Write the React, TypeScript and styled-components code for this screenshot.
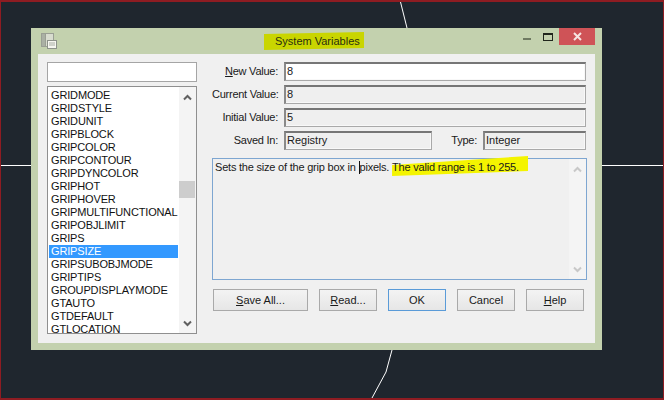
import styled, { createGlobalStyle } from "styled-components";

const items = [
  "GRIDMODE", "GRIDSTYLE", "GRIDUNIT", "GRIPBLOCK", "GRIPCOLOR", "GRIPCONTOUR", "GRIPDYNCOLOR", "GRIPHOT",
  "GRIPHOVER", "GRIPMULTIFUNCTIONAL", "GRIPOBJLIMIT", "GRIPS", "GRIPSIZE", "GRIPSUBOBJMODE", "GRIPTIPS",
  "GROUPDISPLAYMODE", "GTAUTO", "GTDEFAULT", "GTLOCATION",
];

const Global = createGlobalStyle`
  html, body { margin: 0; padding: 0; background: #1f262e; }
  * { box-sizing: border-box; }
`;

const Desktop = styled.div`
  position: relative;
  width: 664px;
  height: 400px;
  overflow: hidden;
  background: #1f262e;
  border: 2px solid #8e1c22;
  border-left-width: 1px;
  border-right-width: 1px;
  font-family: "Liberation Sans", Arial, sans-serif;
  font-size: 11px;
  color: #1a1a1a;
`;

const Crosshair = styled.svg`
  position: absolute;
  left: -1px;
  top: -2px;
`;

const Window = styled.div`
  position: absolute;
  left: 30px;
  top: 26px;
  width: 571px;
  height: 322px;
  background: #c3d1ae;
  display: flex;
  flex-direction: column;
  padding: 0 7px 7px;
`;

const TitleBar = styled.div`
  position: relative;
  height: 26px;
  flex: none;
`;

const AppIcon = styled.svg`
  position: absolute;
  left: 3px;
  top: 5px;
`;

const TitleMark = styled.span`
  position: absolute;
  left: 226px;
  top: 4px;
  width: 100px;
  height: 18px;
  padding-left: 11px;
  background: #c9d500;
  clip-path: polygon(0 2px, 100% 0, 100% 16px, 0 100%);
  line-height: 19px;
  color: #2a2f10;
`;

const WinControls = styled.div`
  position: absolute;
  right: 0;
  top: 0;
  display: flex;
  align-items: flex-start;
`;

const MinGlyph = styled.i`
  display: block;
  width: 8px;
  height: 2px;
  margin: 10px 12px 0 0;
  background: #6f7a62;
`;

const MaxGlyph = styled.i`
  display: block;
  width: 10px;
  height: 8px;
  margin: 5px 6px 0 0;
  border: 1px solid #20261c;
  border-top-width: 2px;
`;

const CloseBtn = styled.div`
  width: 36px;
  height: 17px;
  background: #cf5357;
  display: flex;
  align-items: center;
  justify-content: center;
`;

const Client = styled.div`
  flex: 1;
  background: #f0f0f0;
  display: flex;
  padding: 8px 8px 0 9px;
  gap: 15px;
`;

const LeftCol = styled.div`
  width: 150px;
  flex: none;
  display: flex;
  flex-direction: column;
  gap: 4px;
`;

const Filter = styled.div`
  height: 20px;
  background: #fff;
  border: 1px solid #a5a5a5;
`;

const ListBox = styled.div`
  height: 248px;
  background: #fff;
  border: 1px solid #8f8f8f;
  display: flex;
  overflow: hidden;
`;

const ListRows = styled.div`
  flex: 1;
  min-width: 0;
  padding: 2px 1px 0 1px;
`;

const ListRow = styled.div<{ $selected?: boolean }>`
  height: 13px;
  line-height: 13px;
  padding-left: 2px;
  white-space: nowrap;
  letter-spacing: -0.15px;
  background: ${(p) => (p.$selected ? "#3399ff" : "transparent")};
  color: ${(p) => (p.$selected ? "#fff" : "#111")};
`;

const ScrollTrack = styled.div`
  position: relative;
  width: 17px;
  flex: none;
  background: #f4f4f4;
  display: flex;
  flex-direction: column;
  justify-content: space-between;
  align-items: center;
  padding: 7px 0 6px;
`;

const ScrollThumb = styled.div`
  position: absolute;
  left: 0;
  top: 94px;
  width: 16px;
  height: 17px;
  background: #cdcdcd;
`;

const RightCol = styled.div`
  flex: 1;
  display: flex;
  flex-direction: column;
  min-width: 0;
`;

const Fields = styled.div`
  display: grid;
  grid-template-columns: 66px 148px 39px 103px;
  column-gap: 6px;
  row-gap: 4px;
  grid-auto-rows: 19px;
`;

const FieldLabel = styled.label`
  text-align: right;
  line-height: 19px;
  white-space: nowrap;
  letter-spacing: -0.25px;
`;

const FieldBox = styled.div<{ $white?: boolean; $wide?: boolean }>`
  ${(p) => (p.$wide ? "grid-column: 2 / span 3;" : "")}
  height: 19px;
  line-height: 15px;
  padding: 0 0 0 1px;
  background: ${(p) => (p.$white ? "#fff" : "#efefef")};
  border: 1px solid #a9a9a9;
  border-top: 2px solid #767676;
  border-left: 2px solid #8a8a8a;
  box-shadow: inset -1px -1px 0 #f8f8f8;
`;

const Description = styled.div`
  margin: 8px 0 0 0;
  height: 122px;
  background: #f0f0f0;
  border: 1px solid #7ea6d1;
  display: flex;
`;

const DescText = styled.div`
  flex: 1;
  padding: 1px 2px;
  line-height: 14px;
  white-space: nowrap;
  letter-spacing: -0.21px;
`;

const Caret = styled.span`
  display: inline-block;
  width: 1px;
  height: 13px;
  background: #111;
  vertical-align: -3px;
`;

const Marked = styled.span`
  position: relative;
  isolation: isolate;
  &::before {
    content: "";
    position: absolute;
    z-index: -1;
    left: 0;
    top: -5px;
    width: 136px;
    height: 20px;
    background: #f4f400;
    clip-path: polygon(0 9px, 100% 0, 100% 15px, 0 100%);
  }
`;

const Buttons = styled.div`
  margin: 9px 0 0 1px;
  display: flex;
  gap: 11px;
`;

const Btn = styled.button<{ $w: number; $default?: boolean }>`
  width: ${(p) => p.$w}px;
  height: 22px;
  padding: 0;
  font: inherit;
  color: #1a1a1a;
  background: linear-gradient(#f3f3f3, #e6e6e6);
  border: 1px solid ${(p) => (p.$default ? "#5a9bd8" : "#a9a9a9")};
  u { text-underline-offset: 1px; }
`;

const Chevron = ({ up, color }: { up?: boolean; color: string }) => (
  <svg width="9" height="7" viewBox="0 0 9 7">
    <path d={up ? "M1 5.5 4.5 2 8 5.5" : "M1 1.5 4.5 5 8 1.5"} fill="none" stroke={color} strokeWidth="2" />
  </svg>
);

export default function App() {
  return (
    <>
      <Global />
      <Desktop>
        <Crosshair width="664" height="400">
          <path d="M0 165.5H31M602 165.5H664M400 0 407 28M392 350 386 372 372 398" stroke="#fff" strokeWidth="1" fill="none" />
        </Crosshair>
        <Window>
          <TitleBar>
            <AppIcon width="16" height="16" viewBox="0 0 16 16">
              <rect x="0.5" y="0.5" width="12" height="13" fill="#d8dccf" stroke="#9a9f94" />
              <rect x="0.5" y="0.5" width="4" height="13" fill="#aab0a4" stroke="#9a9f94" />
              <rect x="6.5" y="7.5" width="9" height="8" fill="#f6f6f0" stroke="#8d928a" />
              <path d="M8 10H14M8 12H14" stroke="#a8ada4" />
            </AppIcon>
            <TitleMark>System Variables</TitleMark>
            <WinControls>
              <MinGlyph />
              <MaxGlyph />
              <CloseBtn>
                <svg width="9" height="9" viewBox="0 0 9 9">
                  <path d="M1 1 8 8M8 1 1 8" stroke="#f6e4e2" strokeWidth="2" />
                </svg>
              </CloseBtn>
            </WinControls>
          </TitleBar>
          <Client>
            <LeftCol>
              <Filter />
              <ListBox>
                <ListRows>
                  {items.map((it) => (
                    <ListRow key={it} $selected={it === "GRIPSIZE"}>{it}</ListRow>
                  ))}
                </ListRows>
                <ScrollTrack>
                  <Chevron up color="#606060" />
                  <ScrollThumb />
                  <Chevron color="#606060" />
                </ScrollTrack>
              </ListBox>
            </LeftCol>
            <RightCol>
              <Fields>
                <FieldLabel><u>N</u>ew Value:</FieldLabel>
                <FieldBox $white $wide>8</FieldBox>
                <FieldLabel>Current Value:</FieldLabel>
                <FieldBox $wide>8</FieldBox>
                <FieldLabel>Initial Value:</FieldLabel>
                <FieldBox $wide>5</FieldBox>
                <FieldLabel>Saved In:</FieldLabel>
                <FieldBox>Registry</FieldBox>
                <FieldLabel>Type:</FieldLabel>
                <FieldBox>Integer</FieldBox>
              </Fields>
              <Description>
                <DescText>
                  Sets the size of the grip box in <Caret />pixels. <Marked>The valid range is 1 to 255.</Marked>
                </DescText>
                <ScrollTrack>
                  <Chevron up color="#c8c8c8" />
                  <Chevron color="#c8c8c8" />
                </ScrollTrack>
              </Description>
              <Buttons>
                <Btn $w={95}><u>S</u>ave All...</Btn>
                <Btn $w={58}><u>R</u>ead...</Btn>
                <Btn $w={58} $default>OK</Btn>
                <Btn $w={58}>Cancel</Btn>
                <Btn $w={58}><u>H</u>elp</Btn>
              </Buttons>
            </RightCol>
          </Client>
        </Window>
      </Desktop>
    </>
  );
}
